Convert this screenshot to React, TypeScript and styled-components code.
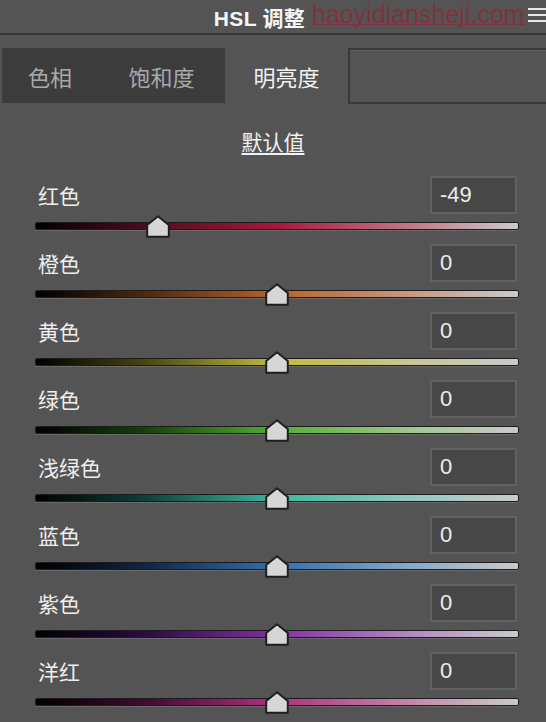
import React from "react";
import styled, { createGlobalStyle } from "styled-components";

const GlobalStyle = createGlobalStyle`
  html, body {
    margin: 0;
    padding: 0;
    background: #545454;
  }
  body {
    font-family: "Noto Sans CJK SC", "Liberation Sans", sans-serif;
    overflow: hidden;
  }
`;

const Panel = styled.div`
  position: relative;
  width: 546px;
  height: 722px;
  background: #545454;
  overflow: hidden;
`;

const Header = styled.div`
  height: 33px;
  border-bottom: 2px solid #363636;
  display: flex;
  align-items: center;
  justify-content: center;
  padding-right: 27px;
  position: relative;
`;

const Title = styled.div`
  font-family: "Liberation Sans", "Noto Sans CJK SC", sans-serif;
  font-size: 21px;
  font-weight: bold;
  color: #f6f6f6;
  letter-spacing: 0.3px;
`;

const MenuIcon = styled.svg`
  position: absolute;
  right: 0;
  top: 8px;
`;

const Watermark = styled.div`
  position: absolute;
  left: 312px;
  top: 0;
  font-family: "Liberation Sans", sans-serif;
  font-size: 25px;
  color: rgba(160, 24, 46, 0.6);
  text-decoration: underline;
  text-decoration-thickness: 1px;
  pointer-events: none;
`;

const TabStrip = styled.div`
  display: flex;
  margin-top: 13px;
  height: 56px;
`;

const InactiveGroup = styled.div`
  display: flex;
  margin-left: 2px;
  height: 55px;
  background: #3c3c3c;
`;

const Tab = styled.div<{ $w: number; $active?: boolean }>`
  width: ${(p) => p.$w}px;
  display: flex;
  align-items: center;
  justify-content: center;
  font-size: 22px;
  color: ${(p) => (p.$active ? "#f2f2f2" : "#a9a9a9")};
  flex-shrink: 0;
`;

const ActiveTab = styled(Tab)`
  height: 56px;
  border-right: 2px solid #393939;
  box-sizing: border-box;
`;

const TabFiller = styled.div`
  flex: 1;
  height: 56px;
  box-sizing: border-box;
  border-top: 2px solid #3a3a3a;
  border-bottom: 2px solid #3a3a3a;
  box-shadow: inset 0 1px 0 #5e5e5e;
`;

const DefaultRow = styled.div`
  height: 72px;
  display: flex;
  align-items: center;
  justify-content: center;
`;

const DefaultLink = styled.span`
  font-size: 21px;
  color: #f2f2f2;
  text-decoration: underline;
  text-underline-offset: 3px;
  padding-top: 2px;
`;

const Rows = styled.div`
  display: flex;
  flex-direction: column;
  padding: 0 27px 0 35px;
`;

const Row = styled.div`
  display: flex;
  flex-direction: column;
`;

const RowTop = styled.div`
  height: 38px;
  display: flex;
  align-items: center;
  justify-content: space-between;
`;

const Label = styled.div`
  margin-left: 3px;
  font-size: 21px;
  color: #efefef;
`;

const ValueBox = styled.div`
  width: 87px;
  height: 38px;
  box-sizing: border-box;
  margin-right: 2px;
  background: #474747;
  border: 2px solid #626262;
  display: flex;
  align-items: center;
  padding-left: 8px;
  font-family: "Liberation Sans", sans-serif;
  font-size: 22px;
  color: #ededed;
`;

const SliderArea = styled.div`
  height: 30px;
  position: relative;
`;

const Rail = styled.div<{ $grad: string }>`
  position: absolute;
  left: 0;
  right: 0;
  top: 8px;
  height: 6px;
  border: 1px solid #1c1c1c;
  border-radius: 2px;
  background: ${(p) => p.$grad};
  box-shadow: 0 1px 0 #6a6a6a;
`;

const Thumb = styled.svg`
  position: absolute;
  top: 1px;
  margin-left: -12px;
`;

type Channel = { name: string; value: number; mid: string; dark: string; light: string };

const channels: Channel[] = [
  { name: "红色", value: -49, dark: "#4a0c1c", mid: "#a8183c", light: "#c27888" },
  { name: "橙色", value: 0, dark: "#4a2810", mid: "#b8622c", light: "#c89a80" },
  { name: "黄色", value: 0, dark: "#46440e", mid: "#c0bc40", light: "#c8c694" },
  { name: "绿色", value: 0, dark: "#163e0c", mid: "#52b02e", light: "#a2c690" },
  { name: "浅绿色", value: 0, dark: "#0e3e36", mid: "#3cb8a0", light: "#94c8c0" },
  { name: "蓝色", value: 0, dark: "#0e2442", mid: "#3270b0", light: "#86aac8" },
  { name: "紫色", value: 0, dark: "#2a0a40", mid: "#8430a4", light: "#b488c4" },
  { name: "洋红", value: 0, dark: "#3e0a2e", mid: "#b03082", light: "#c488aa" },
];

const gradientFor = (c: Channel) =>
  `linear-gradient(to right, #000 0%, ${c.dark} 22%, ${c.mid} 50%, ${c.light} 78%, #cacaca 100%)`;

function SliderThumb({ value }: { value: number }) {
  const pct = ((value + 100) / 200) * 100;
  return (
    <Thumb width="24" height="23" viewBox="0 0 24 23" style={{ left: `${pct}%` }}>
      <polygon points="12,1.2 22.8,10 22.8,21.8 1.2,21.8 1.2,10" fill="#d6d6d6" stroke="#1e1e1e" strokeWidth="2" strokeLinejoin="round" />
    </Thumb>
  );
}

export default function App() {
  return (
    <Panel>
      <GlobalStyle />
      <Header>
        <Title>HSL 调整</Title>
        <MenuIcon width="18" height="14" viewBox="0 0 18 14">
          <rect x="0" y="0" width="18" height="2" fill="#e8e8e8" />
          <rect x="0" y="6" width="18" height="2" fill="#e8e8e8" />
          <rect x="0" y="12" width="18" height="2" fill="#e8e8e8" />
        </MenuIcon>
      </Header>
      <Watermark>haoyidiansheji.com</Watermark>

      <TabStrip>
        <InactiveGroup>
          <Tab $w={96}>色相</Tab>
          <Tab $w={127}>饱和度</Tab>
        </InactiveGroup>
        <ActiveTab $w={125} $active>
          明亮度
        </ActiveTab>
        <TabFiller />
      </TabStrip>

      <DefaultRow>
        <DefaultLink>默认值</DefaultLink>
      </DefaultRow>

      <Rows>
        {channels.map((c) => (
          <Row key={c.name}>
            <RowTop>
              <Label>{c.name}</Label>
              <ValueBox>{c.value}</ValueBox>
            </RowTop>
            <SliderArea>
              <Rail $grad={gradientFor(c)} />
              <SliderThumb value={c.value} />
            </SliderArea>
          </Row>
        ))}
      </Rows>
    </Panel>
  );
}
